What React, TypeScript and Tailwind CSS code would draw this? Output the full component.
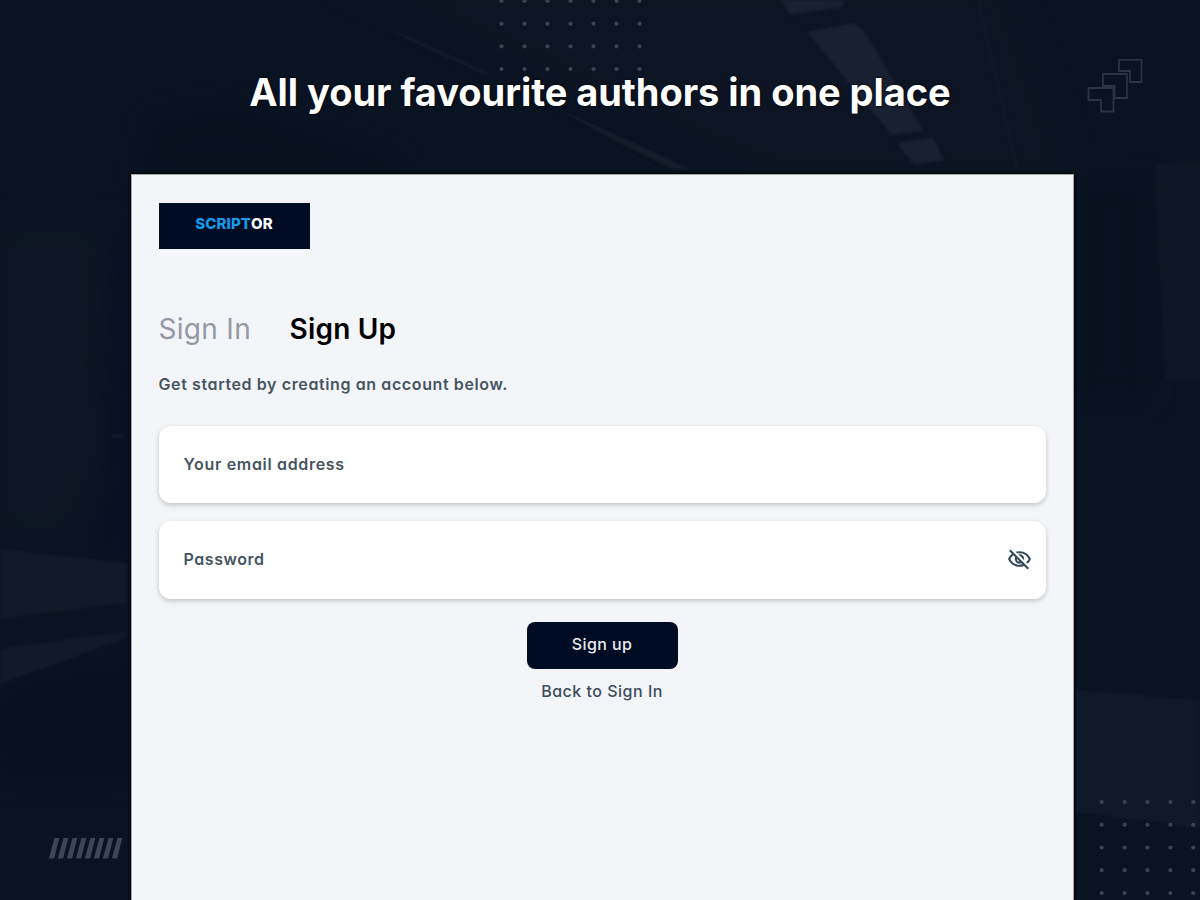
import { MdOutlineVisibilityOff } from "react-icons/md";

const topDots = { xs: [501.5, 524.5, 547.5, 570.5, 593.5, 616.5, 639.5], ys: [1, 23.7, 46.3, 69] };
const bottomDots = { xs: [1101.7, 1124.6, 1147.5, 1170.4, 1193.3], ys: [802, 824.8, 847.5, 870.2, 893] };
const slashes = [0, 1, 2, 3, 4, 5, 6, 7];

function Dots({ xs, ys }: { xs: number[]; ys: number[] }) {
  return (
    <g fill="#3b4353">
      {ys.map((y) => xs.map((x) => <circle key={`${x}-${y}`} cx={x} cy={y} r="2.1" />))}
    </g>
  );
}

function Backdrop() {
  return (
    <svg
      className="absolute inset-0 h-full w-full"
      viewBox="0 0 1200 900"
      preserveAspectRatio="none"
      aria-hidden="true"
    >
      <defs>
        <filter id="soft" x="-20%" y="-20%" width="140%" height="140%" colorInterpolationFilters="sRGB">
          <feGaussianBlur stdDeviation="1" />
        </filter>
        <filter id="wide" x="-30%" y="-30%" width="160%" height="160%" colorInterpolationFilters="sRGB">
          <feGaussianBlur stdDeviation="12" />
        </filter>
      </defs>

      <g filter="url(#wide)">
        <path d="M330 -20H1010L1080 180H760Z" fill="#0d1524" />
        <path d="M150 120L230 105L400 160V180H140Z" fill="#08101f" />
        <path d="M0 220H105V480L60 540H0Z" fill="#0c1624" />
        <path d="M112 230H132V560H100Z" fill="#071023" />
        <path d="M0 690L135 660V780H0Z" fill="#07101f" />
        <path d="M1074 180H1150V400H1074Z" fill="#07111f" />
      </g>

      {/* ceiling lights and wall panels */}
      <g filter="url(#soft)">
        <path d="M780 0H844L843 7L791 15Z" fill="#182031" />
        <path d="M807 32L854 23L864 30L924 131L891 135Z" fill="#182031" />
        <path d="M897 143L933 137L944 160L914 165Z" fill="#182031" />
        <path d="M386 29L412 38L490 74L484 74Z" fill="#141d2b" />
        <path d="M560 110L625 139L690 169H672L612 139Z" fill="#141e2c" />
        <path d="M978 0L1018 172" stroke="#111a29" strokeWidth="2" />
        <path d="M0 549L127 563V603L0 619Z" fill="#101a28" />
        <path d="M0 649L127 631V638L0 684Z" fill="#101a28" />
        <path d="M112 436H124" stroke="#172130" strokeWidth="2" />
        <path d="M1154 163L1200 161V380H1165Z" fill="#0d1624" />
        <path d="M1075 690L1200 700V828L1075 812Z" fill="#101928" />
      </g>

      <Dots {...topDots} />
      <Dots {...bottomDots} />

      <g fill="none" stroke="#2b3443" strokeWidth="1.8">
        <path d="M1119 59.8H1141.5V82H1130V71H1119Z" />
        <path d="M1103 74H1127V98H1114.5V86H1103Z" />
        <path d="M1088.5 88H1113.5V111.5H1101V100H1088.5Z" />
      </g>

      <g fill="#3d4655">
        {slashes.map((i) => (
          <path key={i} d={`M${54.5 + i * 9} 838h4.8l-5.2 20.5h-5.3Z`} />
        ))}
      </g>
    </svg>
  );
}

export default function App() {
  return (
    <div className="relative flex h-[900px] w-[1200px] flex-col items-center overflow-hidden bg-[#0a1322] font-['Inter',sans-serif] [font-feature-settings:'cv11']">
      <Backdrop />

      <h1 className="relative flex h-[174px] items-start pt-[65px] text-[38px] leading-[54px] font-bold tracking-[-0.04px] whitespace-nowrap text-white [font-feature-settings:normal] [text-shadow:0_0_3px_#000]">
        All your favourite authors in one place
      </h1>

      <main className="relative ml-1 flex w-[943px] flex-1 flex-col border-x border-t border-[#a5a6aa] bg-[#f3f5f9] px-[27px] pt-7 shadow-[0_0_2px_1px_#000]">
        <div className="flex h-[46px] w-[151px] justify-center bg-[#000c24] pt-[11px] text-[15px] leading-[20px] font-extrabold tracking-[0.1px]">
          <span className="text-[#159be8]">SCRIPT</span>
          <span className="text-white">OR</span>
        </div>

        <div className="mt-[60px] flex h-10 items-center gap-[39px] text-[28px] leading-10 whitespace-nowrap">
          <button className="w-[92px] text-left tracking-[0.3px] text-[#9599a5]">Sign In</button>
          <button className="text-left font-semibold tracking-[0.2px] text-black">Sign Up</button>
        </div>

        <p className="mt-[23px] text-[16px] leading-6 font-semibold tracking-[0.61px] text-[#465561]">
          Get started by creating an account below.
        </p>

        <div className="mt-[30px] flex h-[77px] w-[887px] items-center rounded-xl bg-white px-[25px] text-[16px] font-semibold tracking-[0.68px] text-[#465561] shadow-[0_2px_5px_rgba(0,0,0,0.2)]">
          <span className="-mt-0.5">Your email address</span>
        </div>
        <div className="mt-[18px] flex h-[78px] w-[887px] items-center justify-between rounded-xl bg-white pr-3.5 pl-[25px] text-[16px] font-semibold tracking-[0.55px] text-[#465561] shadow-[0_2px_5px_rgba(0,0,0,0.2)]">
          <span className="-mt-0.5">Password</span>
          <MdOutlineVisibilityOff className="-mt-0.5 size-[25px] text-[#304957]" />
        </div>

        <button className="mt-[23px] h-[47px] w-[151px] self-center rounded-lg bg-[#000c24] pb-[3px] text-[16px] font-medium tracking-[0.4px] text-[#e9ebef]">
          Sign up
        </button>
        <button className="mt-[10px] self-center text-[16px] leading-6 font-medium tracking-[0.5px] text-[#3d4c59]">
          Back to Sign In
        </button>
      </main>
    </div>
  );
}
